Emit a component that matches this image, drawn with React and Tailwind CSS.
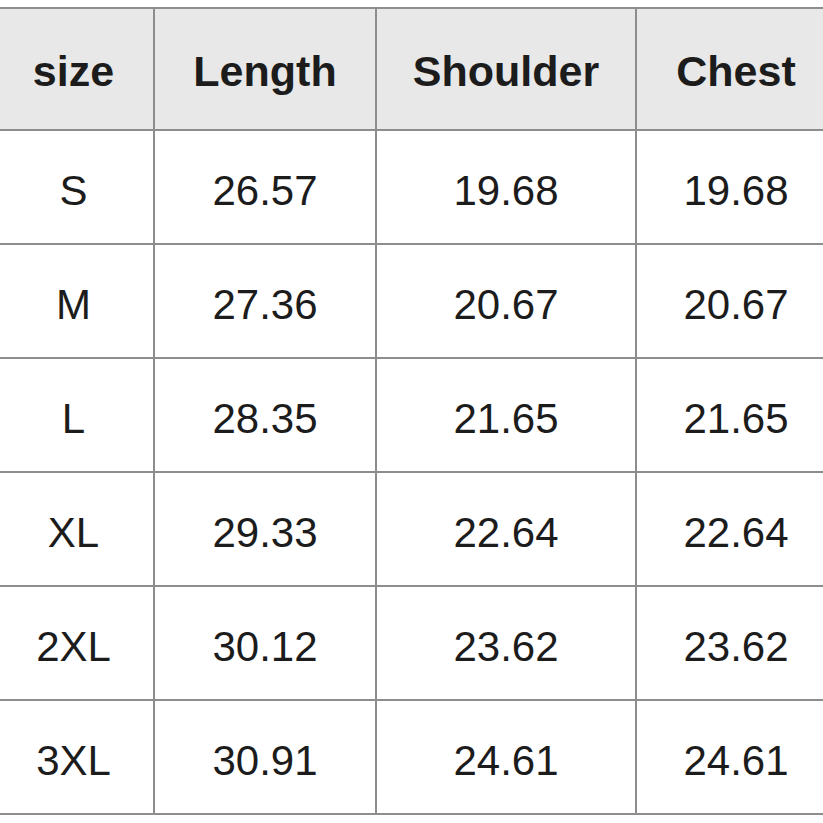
const headers = ["size", "Length", "Shoulder", "Chest"]

const rows = [
    ["S", "26.57", "19.68", "19.68"],
    ["M", "27.36", "20.67", "20.67"],
    ["L", "28.35", "21.65", "21.65"],
    ["XL", "29.33", "22.64", "22.64"],
    ["2XL", "30.12", "23.62", "23.62"],
    ["3XL", "30.91", "24.61", "24.61"],
]

// first column sits a bit left, last a bit right (table is cropped at the edges)
const colPad = ["pr-[6px]", "", "", "pl-[12px]"]

function App() {
    return (
        <div className="w-[823px] h-[823px] bg-white pt-[7px] font-['Liberation_Sans',Arial,sans-serif] text-[#1c1c1c]">
            <div className="grid grid-cols-[153px_220px_258px_186px] gap-[2px] bg-[#8d8d8d] py-[2px]">
                {headers.map((h, i) => (
                    <div key={h} className={"h-[120px] pt-[4px] bg-[#e8e8e8] flex items-center justify-center text-[43px] font-bold " + colPad[i]}>
                        {h}
                    </div>
                ))}
                {rows.map((row) =>
                    row.map((cell, i) => (
                        <div key={row[0] + i} className={"h-[112px] pt-[6px] bg-white flex items-center justify-center text-[42px] " + colPad[i]}>
                            {cell}
                        </div>
                    ))
                )}
            </div>
        </div>
    )
}

export default App
